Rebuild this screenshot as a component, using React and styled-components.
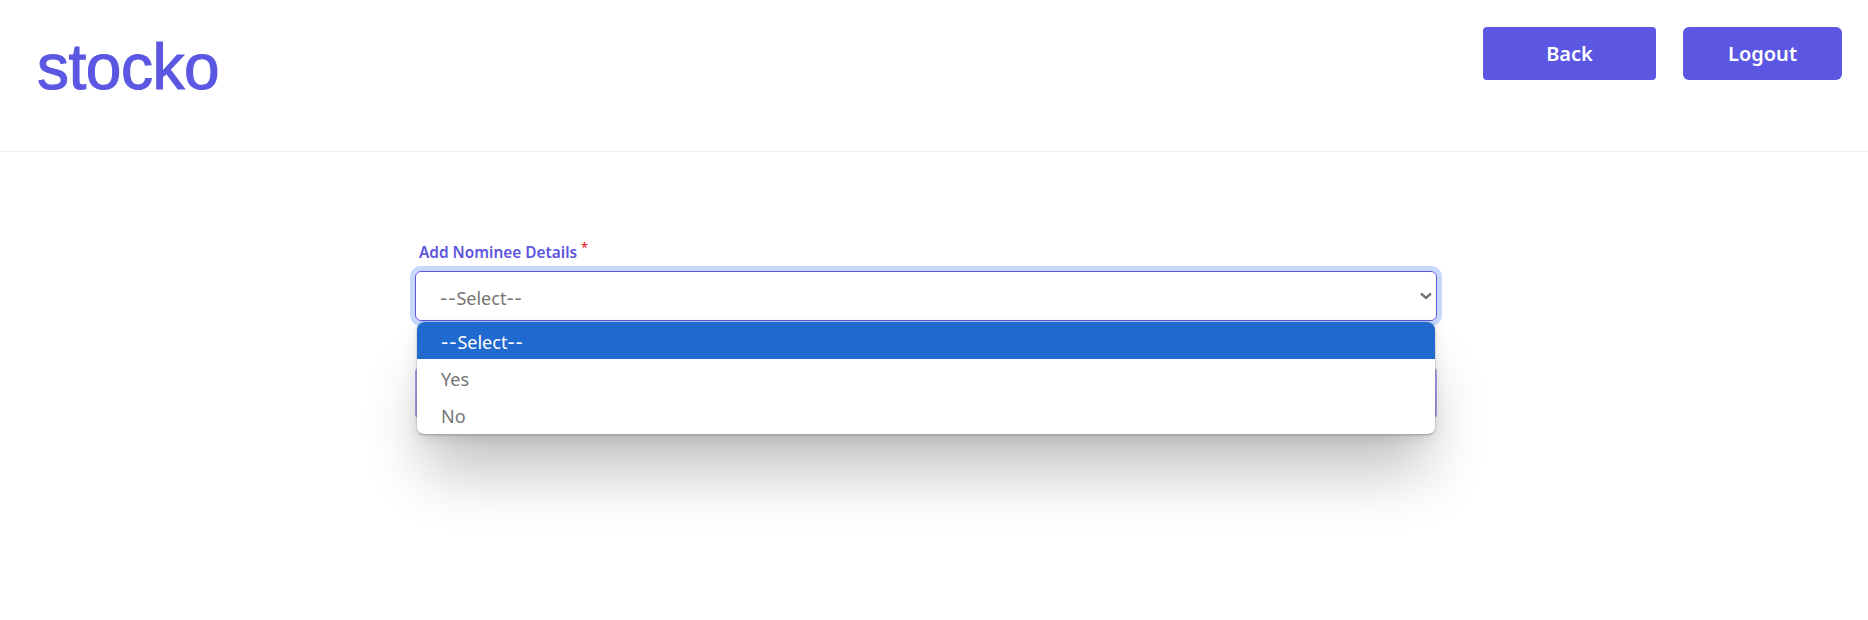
import React from "react";
import styled, { createGlobalStyle } from "styled-components";

const PURPLE = "#5b57e2";

const GlobalStyle = createGlobalStyle`
  html, body, #root {
    margin: 0;
    padding: 0;
    min-height: 620px;
    background: #fff;
    font-family: "Noto Sans", "Open Sans", sans-serif;
  }
`;

// ! Header
const Header = styled.header`
  height: 152px;
  box-sizing: border-box;
  border-bottom: 1px solid #eeeeee;
  padding: 27px 26px 0 38px;
  display: flex;
  justify-content: space-between;
  align-items: flex-start;
`;

const Logo = styled.div`
  font-family: "Liberation Sans", sans-serif;
  font-size: 64px;
  font-weight: 400;
  line-height: 64px;
  letter-spacing: -0.5px;
  -webkit-text-stroke: 1.1px ${PURPLE};
  color: ${PURPLE};
  margin: 8px 0 0 -1px;
`;

const Actions = styled.div`
  display: flex;
  gap: 27px;
`;

const HeaderButton = styled.button`
  width: ${props => props.$width}px;
  height: 53px;
  border: 0;
  border-radius: ${props => props.$radius}px;
  background: ${PURPLE};
  color: #fff;
  font-family: inherit;
  font-size: 20px;
  font-weight: 600;
  padding: 0;
`;

// ! Form
const Main = styled.main`
  min-height: 468px;
  box-sizing: border-box;
  padding: 92px 0 0 415px;
  width: 1437px;
`;

const Label = styled.label`
  display: block;
  margin: 0 0 9px 4px;
  height: 18px;
  font-size: 15.4px;
  line-height: 18px;
  font-weight: 600;
  color: #5e54e0;
`;

const Star = styled.sup`
  color: #f0304a;
  font-size: 13px;
  line-height: 0;
  margin-left: 4px;
`;

const SelectWrap = styled.div`
  position: relative;
`;

const SelectBox = styled.div`
  height: 50px;
  box-sizing: border-box;
  border: 1px solid ${PURPLE};
  border-radius: 6px;
  box-shadow: 0 0 0 5px #c6d9fd;
  padding: 4px 4px 0 24px;
  display: flex;
  align-items: center;
  justify-content: space-between;
  font-size: 18px;
  color: #757575;
`;

const Popup = styled.ul`
  position: absolute;
  top: 51px;
  left: 2px;
  right: 2px;
  margin: 0;
  padding: 0 0 1px;
  list-style: none;
  background: #fff;
  border-radius: 8px;
  overflow: hidden;
  box-sizing: border-box;
  border-bottom: 1px solid #a8a8a8;
  font-size: 18px;
  color: #757575;
  box-shadow: 0 0 2px rgba(0, 0, 0, 0.35), 0 4px 14px rgba(0, 0, 0, 0.1),
    0 45px 60px -8px rgba(0, 0, 0, 0.24);
`;

const PopupOption = styled.li`
  height: 37px;
  line-height: 41px;
  padding-left: 24px;
  background: ${props => (props.$active ? "#1f69cf" : "#fff")};
  color: ${props => (props.$active ? "#fff" : "#757575")};
`;

// the dashes are wider in the original font
const Dashes = styled.span`
  font-family: "DejaVu Sans", sans-serif;
  font-size: 20px;
  letter-spacing: 1px;
`;

const SubmitButton = styled.button`
  display: block;
  width: 100%;
  height: 50px;
  margin-top: 47px;
  border: 0;
  border-radius: 4px;
  background: #a9a7ee;
  padding: 0;
`;

const ChevronIcon = styled.svg`
  margin-top: -4px;
`;

const Chevron = () => (
  <ChevronIcon width="12" height="8" viewBox="0 0 12 8" fill="none">
    <path d="M1 1.5 L6 6 L11 1.5" stroke="#757575" strokeWidth="2.4" />
  </ChevronIcon>
);

const SelectText = () => (
  <span>
    <Dashes>--</Dashes>Select<Dashes>--</Dashes>
  </span>
);

export default function App() {
  return (
    <>
      <GlobalStyle />
      <Header>
        <Logo>stocko</Logo>
        <Actions>
          <HeaderButton $width={173} $radius={4}>Back</HeaderButton>
          <HeaderButton $width={159} $radius={6}>Logout</HeaderButton>
        </Actions>
      </Header>
      <Main>
        <Label>
          Add Nominee Details<Star>*</Star>
        </Label>
        <SelectWrap>
          <SelectBox>
            <SelectText />
            <Chevron />
          </SelectBox>
          <Popup>
            <PopupOption $active><SelectText /></PopupOption>
            <PopupOption>Yes</PopupOption>
            <PopupOption>No</PopupOption>
          </Popup>
        </SelectWrap>
        <SubmitButton />
      </Main>
    </>
  );
}
